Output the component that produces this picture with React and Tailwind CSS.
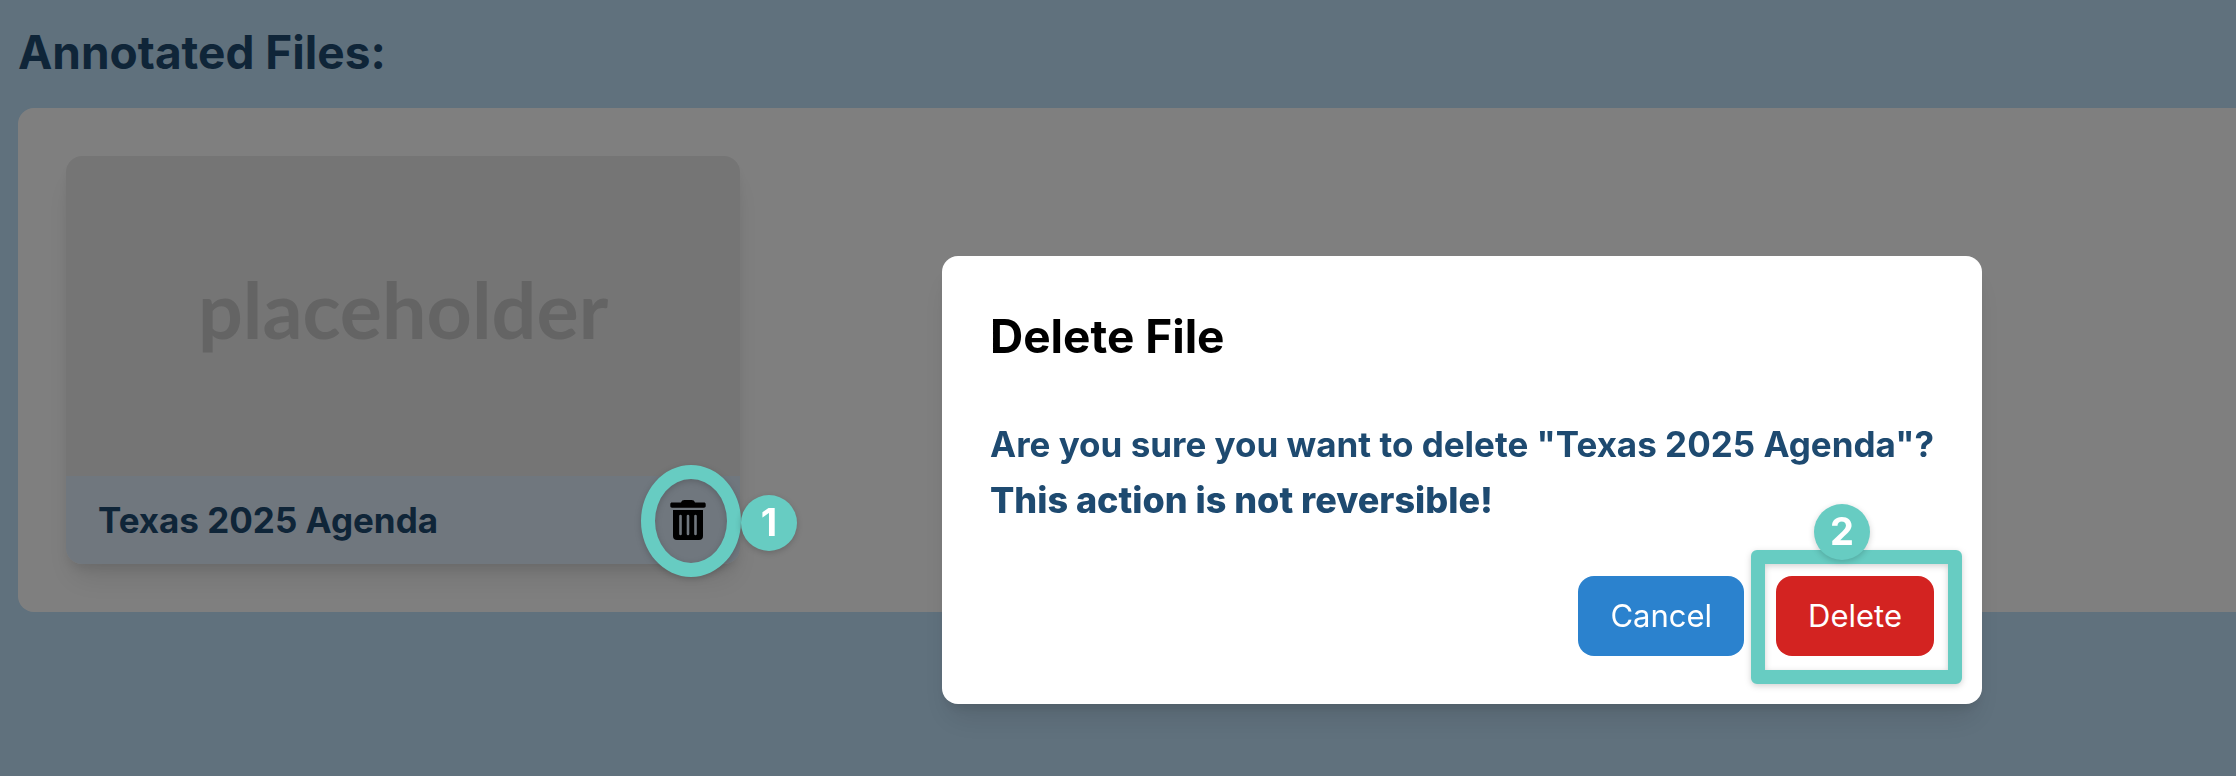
function TrashIcon() {
  return (
    <svg viewBox="0 0 48 48" className="size-12" aria-hidden="true">
      <path
        fillRule="evenodd"
        d="M8 6.5h9C17.600 4.800 18.600 4 20.500 4h7C29.400 4 30.400 4.800 31 6.500h9c1 0 1.700.7 1.700 1.700v1.800c0 1-.7 1.700-1.700 1.700H8c-1 0-1.700-.7-1.700-1.700V8.200c0-1 .7-1.700 1.700-1.700Z M9 14h30v26a4 4 0 0 1-4 4H13a4 4 0 0 1-4-4Z M15.200 20v18a1.300 1.300 0 0 0 2.600 0V20a1.300 1.300 0 0 0-2.600 0Z M22.700 20v18a1.300 1.300 0 0 0 2.600 0V20a1.300 1.300 0 0 0-2.600 0Z M30.200 20v18a1.300 1.300 0 0 0 2.600 0V20a1.300 1.300 0 0 0-2.600 0Z"
      />
    </svg>
  );
}

function StepBadge({ children, className }) {
  return (
    <span
      className={
        "absolute z-30 flex size-14 items-center justify-center rounded-full bg-[#67ccc2] pb-0.5 text-[38px] leading-none font-bold text-white shadow-[0_2px_6px_rgba(0,0,0,0.18)] " +
        className
      }
    >
      {children}
    </span>
  );
}

function FileCard({ name }) {
  return (
    <article className="w-full max-w-[674px] rounded-2xl shadow-[0_20px_30px_-6px_rgba(0,0,0,0.1),0_8px_12px_-4px_rgba(0,0,0,0.1)]">
      <div className="flex h-80 items-center justify-center rounded-t-2xl bg-[#ebebeb] pb-4 font-['Lato',sans-serif] text-[79px] leading-none font-bold text-[#c8c8c8]">
        placeholder
      </div>
      <div className="flex items-center justify-between rounded-b-2xl bg-[#e1eefc] py-4 pr-7 pl-8">
        <h2 className="text-[35px]/14 font-bold text-[#1e4a70]">{name}</h2>
        <div className="relative">
          <button type="button" aria-label={"Delete " + name} className="block">
            <TrashIcon />
          </button>
          <span className="pointer-events-none absolute -top-[31px] -left-[23px] z-20 h-28 w-25 rounded-[50%] border-[14px] border-[#67ccc2] drop-shadow-[0_2px_3px_rgba(0,0,0,0.18)]" />
          <StepBadge className="-top-[1px] left-[77px]">1</StepBadge>
        </div>
      </div>
    </article>
  );
}

function DeleteDialog({ name }) {
  return (
    <div className="fixed inset-0 z-10 flex items-start justify-end bg-black/50 pt-64 pr-[254px]">
      <section
        role="dialog"
        aria-modal="true"
        aria-labelledby="dialog-title"
        className="w-full max-w-[1040px] rounded-2xl bg-white p-12 shadow-[0_20px_30px_-6px_rgba(0,0,0,0.1),0_8px_12px_-4px_rgba(0,0,0,0.1)]"
      >
        <h2 id="dialog-title" className="mb-12 text-[46px]/16 font-bold text-black">
          Delete File
        </h2>
        <p className="text-[35px]/14 font-bold whitespace-nowrap text-[#1e4a70]">
          Are you sure you want to delete "{name}"?
        </p>
        <p className="text-4xl/14 font-extrabold text-[#1e4a70]">This action is not reversible!</p>
        <div className="mt-12 flex justify-end gap-8 text-[31px]/12 text-white">
          <button type="button" className="rounded-2xl bg-[#2b82ce] px-8 py-4">
            Cancel
          </button>
          <div className="relative">
            <button type="button" className="rounded-2xl bg-[#d32321] px-8 py-4">
              Delete
            </button>
            <span className="pointer-events-none absolute -top-[26px] -right-7 -bottom-7 -left-[25px] z-20 rounded-md border-[14px] border-[#67ccc2] drop-shadow-[0_2px_3px_rgba(0,0,0,0.18)]" />
            <StepBadge className="-top-[72px] left-[38px]">2</StepBadge>
          </div>
        </div>
      </section>
    </div>
  );
}

export default function App() {
  const fileName = "Texas 2025 Agenda";
  return (
    <main className="min-h-screen overflow-hidden bg-[#c0e2fa] pt-5 pl-[18px] font-['Inter',sans-serif]">
      <h1 className="mb-6 text-[46px]/16 font-bold text-[#1e4a70]">Annotated Files:</h1>
      <div className="rounded-l-2xl bg-white p-12">
        <FileCard name={fileName} />
      </div>
      <DeleteDialog name={fileName} />
    </main>
  );
}
